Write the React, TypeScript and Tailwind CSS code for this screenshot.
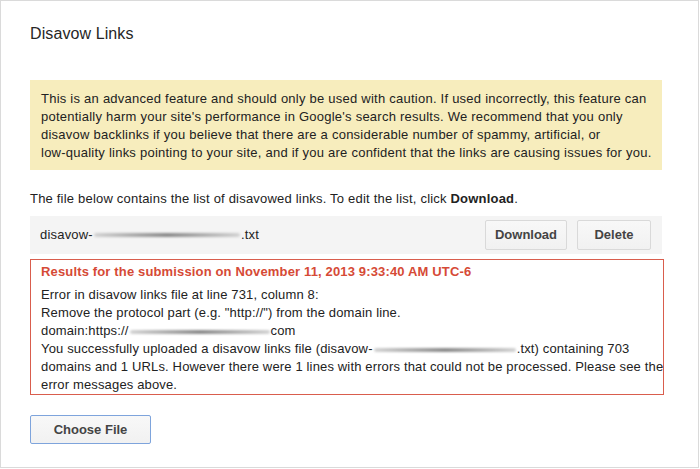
import React from "react";

const Redacted = ({ w }: { w: number }) => (
  <span
    className="inline-block h-[4px] align-middle rounded-full bg-gradient-to-r from-[#d4d4d4] via-[#8c8c8c] to-[#d4d4d4] blur-[0.8px] mx-[1px]"
    style={{ width: w }}
  />
);

const GrayButton = ({ label, width }: { label: string; width: string }) => (
  <button
    className={`${width} h-[30px] rounded-[2px] border border-[#d9d9d9] bg-gradient-to-b from-[#f8f8f8] to-[#f1f1f1] text-[13px] font-bold text-[#444]`}
  >
    {label}
  </button>
);

export default function App() {
  return (
    <div
      className="w-[699px] h-[468px] border border-[#dadada] bg-white text-[#222] pl-[29px] pt-[23px]"
      style={{ fontFamily: '"Liberation Sans", Arial, sans-serif' }}
    >
      <h1 className="text-[16px] leading-[20px] text-[#262626] tracking-[0.1px]">Disavow Links</h1>

      <div className="mt-[36px] w-[632px] bg-[#f7edbd] pt-[10px] pb-[8px] px-[11px] text-[13px] leading-[18px] tracking-[0.24px] whitespace-nowrap">
        This is an advanced feature and should only be used with caution. If used incorrectly, this feature can
        <br />
        potentially harm your site's performance in Google's search results. We recommend that you only
        <br />
        disavow backlinks if you believe that there are a considerable number of spammy, artificial, or
        <br />
        low-quality links pointing to your site, and if you are confident that the links are causing issues for you.
      </div>

      <p className="mt-[20px] text-[13px] leading-[18px] tracking-[0.2px]">
        The file below contains the list of disavowed links. To edit the list, click <span className="font-bold">Download</span>.
      </p>

      <div className="mt-[8px] w-[632px] h-[38px] bg-[#f4f4f4] flex items-center justify-between pl-[10px] pr-[11px]">
        <span className="text-[13px] tracking-[0.2px] flex items-center">
          disavow-
          <Redacted w={146} />
          .txt
        </span>
        <div className="flex gap-[10px]">
          <GrayButton label="Download" width="w-[82px]" />
          <GrayButton label="Delete" width="w-[74px]" />
        </div>
      </div>

      <div className="mt-[5px] w-[634px] border border-[#d95d4d] pt-[3px] pl-[10px] text-[13px] leading-[18px] tracking-[0.15px] whitespace-nowrap">
        <p className="font-bold text-[#d64a36]">Results for the submission on November 11, 2013 9:33:40 AM UTC-6</p>
        <div className="mt-[5px]">
          Error in disavow links file at line 731, column 8:
          <br />
          Remove the protocol part (e.g. "http://") from the domain line.
          <br />
          domain:https://
          <Redacted w={140} />
          com
          <br />
          You successfully uploaded a disavow links file (disavow-
          <Redacted w={142} />
          .txt) containing 703
          <br />
          domains and 1 URLs. However there were 1 lines with errors that could not be processed. Please see the
          <br />
          error messages above.
        </div>
      </div>

      <button className="mt-[20px] w-[121px] h-[29px] rounded-[2px] border border-[#7ea4dc] bg-gradient-to-b from-[#f8f8f8] to-[#f1f1f1] text-[13px] font-bold text-[#444]">
        Choose File
      </button>
    </div>
  );
}
